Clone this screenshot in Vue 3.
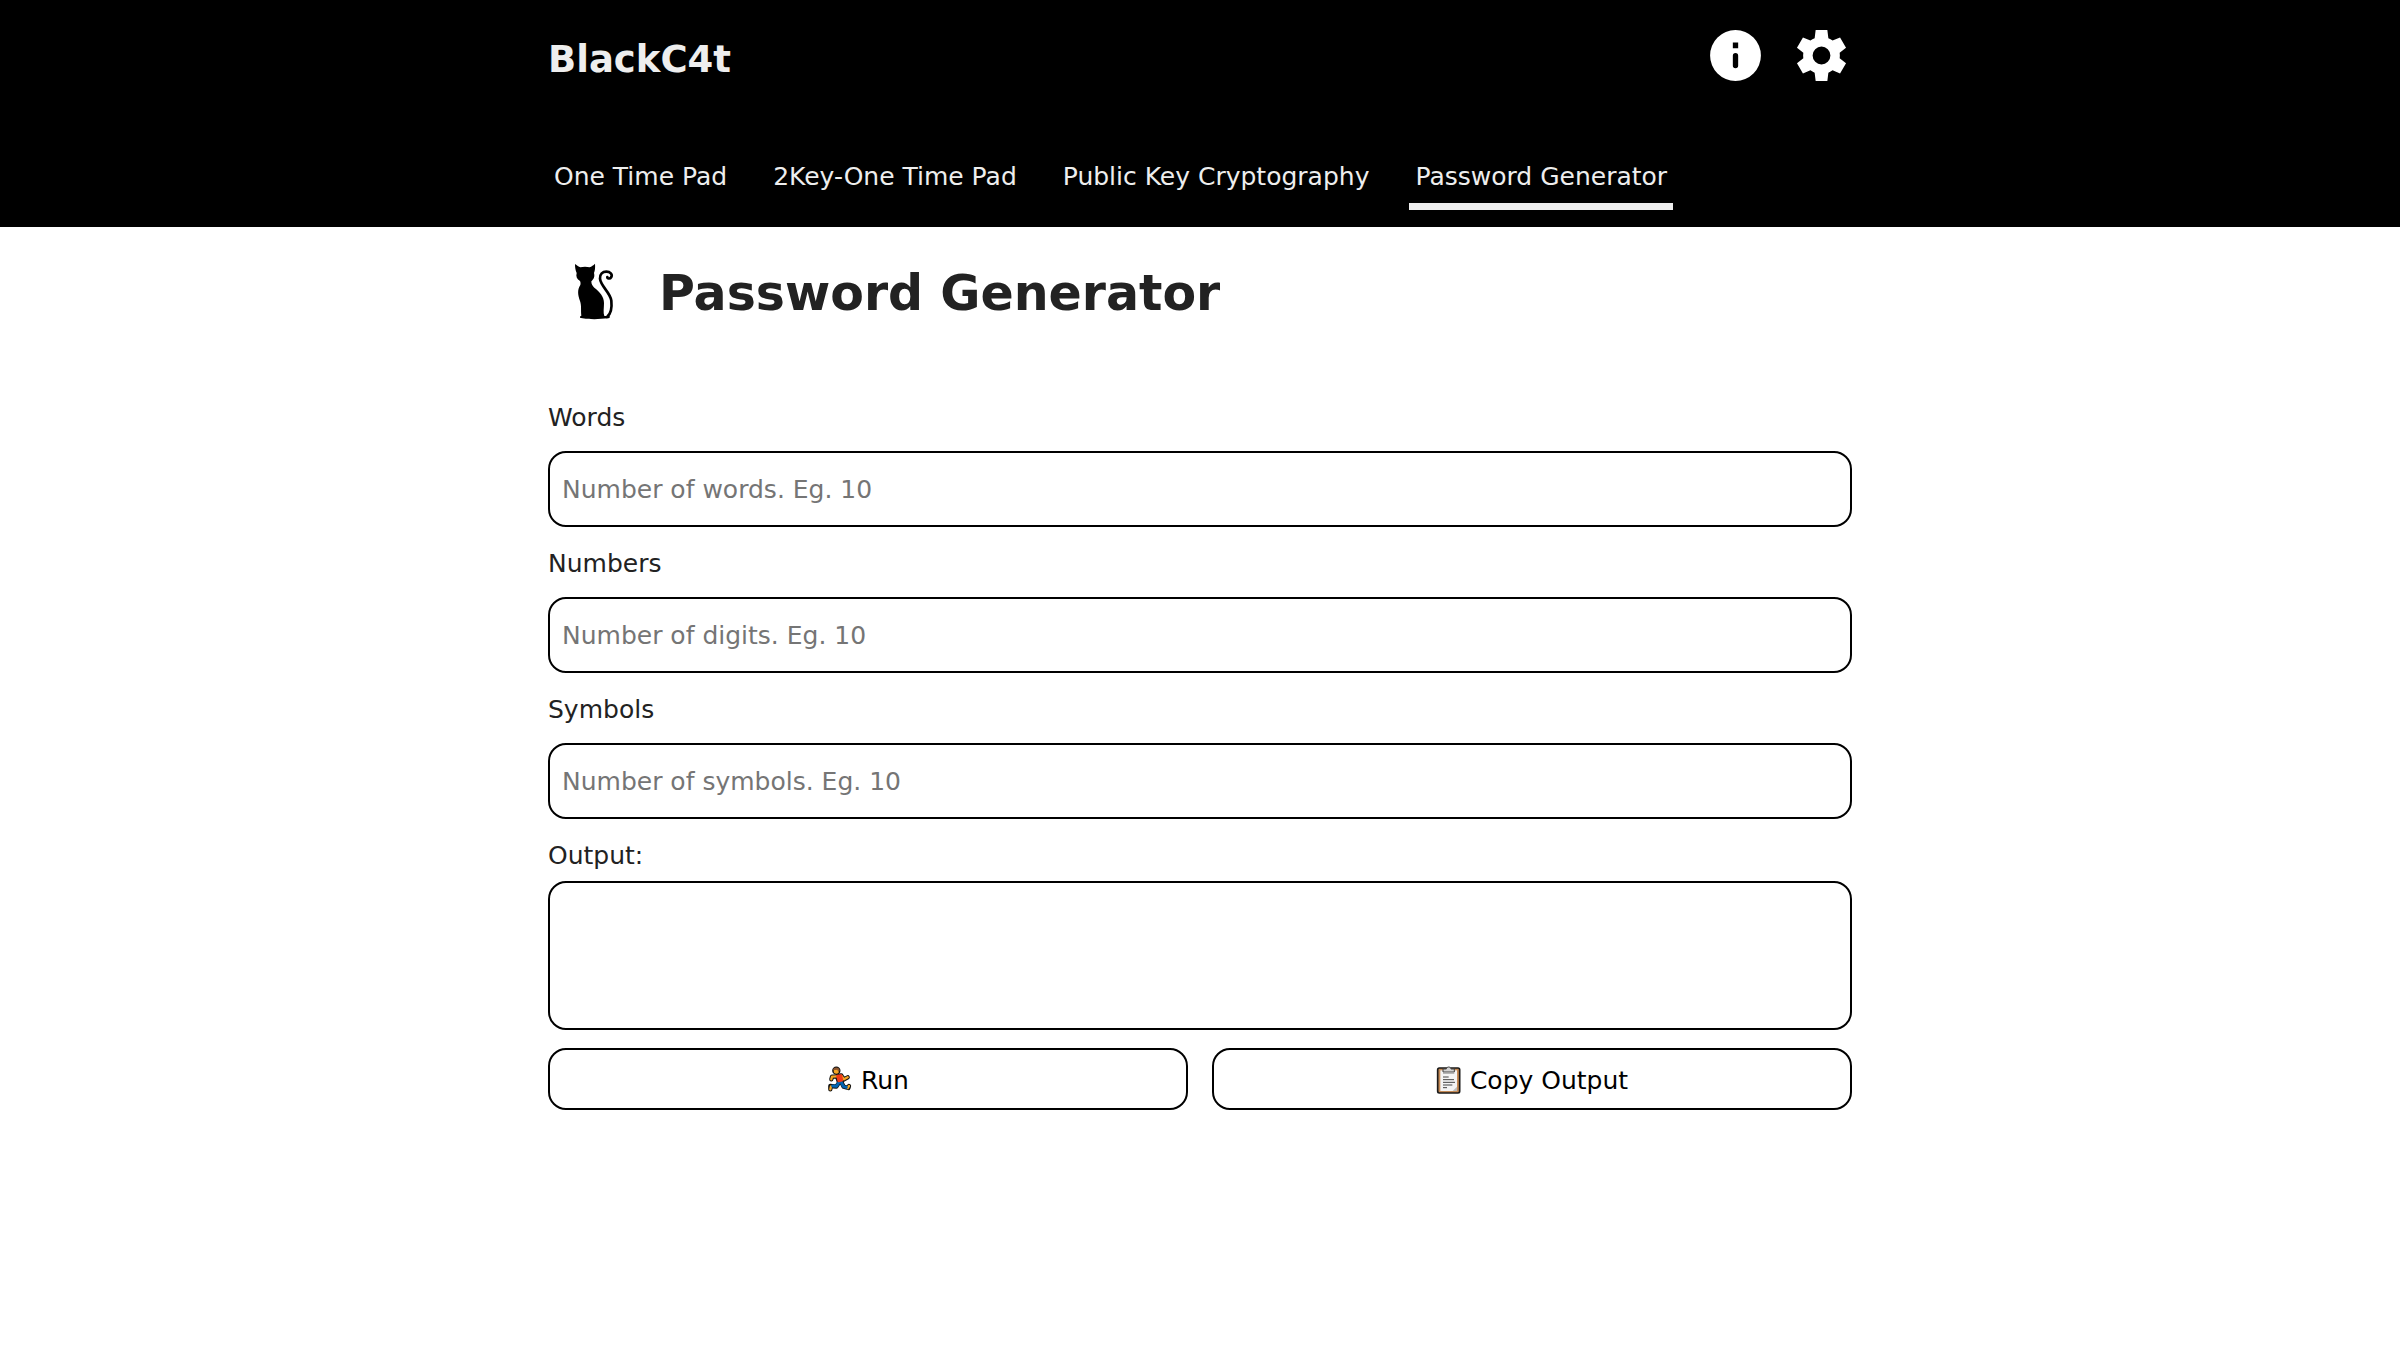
<script setup>
import { ref } from 'vue'

const tabs = ['One Time Pad', '2Key-One Time Pad', 'Public Key Cryptography', 'Password Generator']
const active = ref('Password Generator')

const fields = [
  { id: 'words', label: 'Words', placeholder: 'Number of words. Eg. 10' },
  { id: 'numbers', label: 'Numbers', placeholder: 'Number of digits. Eg. 10' },
  { id: 'symbols', label: 'Symbols', placeholder: 'Number of symbols. Eg. 10' },
]
const values = ref({ words: '', numbers: '', symbols: '' })
const output = ref('')

const wordList = ['amber', 'birch', 'cloud', 'delta', 'ember', 'frost', 'grove', 'harbor', 'iris', 'lunar']
const pick = (source) => source[Math.floor(Math.random() * source.length)]
const many = (count, source) => Array.from({ length: Number(count) || 0 }, () => pick(source))

function run() {
  const { words, numbers, symbols } = values.value
  output.value = [
    many(words, wordList).join('-'),
    many(numbers, '0123456789').join(''),
    many(symbols, '!@#$%^&*?').join(''),
  ].join('')
}

function copyOutput() {
  navigator.clipboard?.writeText(output.value)
}
</script>

<template>
  <header class="top">
    <div class="wrap">
      <div class="bar">
        <a class="brand" href="#">BlackC4t</a>
        <div class="actions">
          <button class="icon" type="button" aria-label="About">
            <svg viewBox="0 0 24 24">
              <path
                fill="#fff"
                fill-rule="evenodd"
                d="M12 2a10 10 0 1 0 0 20 10 10 0 0 0 0-20zM10.950 6.900h2.100v2.200h-2.100zM12 11a1.050 1.050 0 0 1 1.050 1.050v3.900a1.050 1.050 0 0 1-2.100 0v-3.900A1.050 1.050 0 0 1 12 11z"
              />
            </svg>
          </button>
          <button class="icon" type="button" aria-label="Settings">
            <svg viewBox="0 0 24 24">
              <path
                fill="#fff"
                fill-rule="evenodd"
                d="M9.700 2h4.600l.4 3.200c.6.240 1.150.560 1.650.940l2.950-1.200 2.350 4-2.500 1.950c.1.700.1 1.500 0 2.200l2.500 1.950-2.350 4-2.950-1.200c-.5.380-1.050.7-1.650.940l-.4 3.220H9.700l-.4-3.220c-.6-.240-1.150-.560-1.650-.940l-2.950 1.200-2.350-4 2.500-1.950c-.1-.7-.1-1.500 0-2.200L2.350 8.940l2.350-4 2.950 1.200c.5-.380 1.050-.7 1.650-.940zM12 8.500a3.500 3.500 0 1 0 0 7 3.500 3.500 0 0 0 0-7z"
              />
            </svg>
          </button>
        </div>
      </div>
      <nav class="tabs">
        <a
          v-for="tab in tabs"
          :key="tab"
          href="#"
          class="tab"
          :class="{ current: tab === active }"
          @click.prevent="active = tab"
        >{{ tab }}</a>
      </nav>
    </div>
  </header>

  <main class="wrap">
    <div class="heading">
      <svg class="cat" viewBox="0 0 180 210" aria-hidden="true">
        <path
          d="M30 27C36 31 41 35 46 37Q60 34 74 37C80 34 85 31 90 26C91 38 90 46 87 54C90 66 86 72 79 79C79 87 82 93 88 98C104 110 117 125 117 144C117 160 114 172 118 183H130C137 183 137 189 128 190C104 193 72 194 48 189C43 188 44 183 49 182C47 164 50 152 45 138C38 118 37 104 46 90C47 86 47 82 45 78C36 73 32 65 35 54C31 45 30 37 30 27Z"
        />
        <path
          d="M126 186C139 176 141 156 139 137C136 112 107 94 105 71C104 57 113 50 124 50C136 50 143 58 139 66C135 73 126 71 127 66"
          fill="none"
          stroke="#000"
          stroke-width="8"
          stroke-linecap="round"
        />
      </svg>
      <h1>Password Generator</h1>
    </div>

    <form @submit.prevent="run">
      <div v-for="field in fields" :key="field.id" class="field">
        <label :for="field.id">{{ field.label }}</label>
        <input :id="field.id" v-model="values[field.id]" type="text" :placeholder="field.placeholder" />
      </div>
      <div class="field result">
        <label for="output">Output:</label>
        <textarea id="output" v-model="output" readonly></textarea>
      </div>
      <div class="buttons">
        <button class="action" type="submit">
          <svg class="glyph" viewBox="0 0 78 84" aria-hidden="true">
            <g stroke="#111" stroke-width="13" stroke-linecap="round" stroke-linejoin="round" fill="none">
              <circle cx="28" cy="14" r="6" />
              <path d="M30 30 43 28 46 44 35 46Z M43 29 51 40 62 34 M29 31 15 32 13 40 M36 50 28 62 10 60 10 70 M44 50 50 62 64 66 66 60" />
            </g>
            <g stroke-linecap="round" stroke-linejoin="round" fill="none" stroke-width="7">
              <path d="M43 29 51 40 62 34M29 31 15 32 13 40" stroke="#f5a623" />
              <path d="M12 61 10 70M62 66 66 60" stroke="#f5a623" />
              <path d="M36 49 28 61 17 60M43 49 49 61 58 64" stroke="#0063b1" stroke-width="9" />
              <path d="M31 30 42 28 45 43 35 45Z" stroke="#f03a17" fill="#f03a17" />
            </g>
            <circle cx="28" cy="15" r="8" fill="#f5a623" />
            <path d="M18 13C18 2 38 2 38 14L34 18 31 11Z" fill="#8e562e" />
          </svg>
          <span>Run</span>
        </button>
        <button class="action" type="button" @click="copyOutput">
          <svg class="glyph" viewBox="0 0 78 84" aria-hidden="true">
            <rect x="5" y="6" width="66" height="75" rx="5" fill="#c58a55" stroke="#1a1a1a" stroke-width="5" />
            <path d="M13 13H63V75H13Z" fill="#f4f4f4" />
            <path d="M63 62V75H50Z" fill="#bdbdbd" />
            <path d="M21 18V9H31C32 1 44 1 45 9H55V18Z" fill="#d2d2d2" stroke="#444" stroke-width="3" />
            <path d="M21 22H55" stroke="#aaa" stroke-width="3" />
            <path d="M21 33H38M21 41H54M21 49H57M21 57H49M21 65H33" stroke="#444" stroke-width="3" />
          </svg>
          <span>Copy Output</span>
        </button>
      </div>
    </form>
  </main>
</template>

<style>
body {
  margin: 0;
  background: #fff;
}
</style>

<style scoped>
.top,
main {
  font-family: Verdana, 'DejaVu Sans', sans-serif;
  font-size: 25px;
  line-height: 38px;
  color: #222;
}

.wrap {
  box-sizing: border-box;
  width: 100%;
  max-width: 1304px;
  margin: 0 auto;
}

.top {
  background: #000;
  padding: 25px 0 17px;
}

.bar {
  display: flex;
  justify-content: space-between;
  align-items: flex-end;
}

.brand {
  font-size: 37px;
  line-height: 52px;
  font-weight: bold;
  color: #eee;
  text-decoration: none;
}

.actions {
  display: flex;
  gap: 25px;
}

.icon {
  display: block;
  width: 61px;
  height: 61px;
  padding: 0;
  border: 0;
  background: none;
  cursor: pointer;
}

.icon svg {
  display: block;
  width: 100%;
  height: 100%;
}

.tabs {
  display: flex;
  flex-wrap: wrap;
  gap: 34px;
  margin-top: 72px;
}

.tab {
  padding: 0 6px 7px;
  border-bottom: 7px solid transparent;
  color: #eee;
  text-decoration: none;
}

.tab.current {
  border-color: #eee;
}

.heading {
  display: flex;
  align-items: flex-end;
  gap: 34px;
  padding: 28px 0 0 17px;
}

.cat {
  width: 60px;
  height: 70px;
}

h1 {
  margin: 0;
  font-size: 49px;
  line-height: 62px;
}

form {
  margin-top: 74px;
}

.field {
  display: flex;
  flex-direction: column;
  gap: 14px;
  margin-bottom: 18px;
}

.result {
  gap: 6px;
}

input,
textarea,
.action {
  box-sizing: border-box;
  border: 2px solid #000;
  border-radius: 18px;
  background: #fff;
  color: #000;
  font-family: inherit;
  font-size: 25px;
}

input,
textarea {
  display: block;
  width: 100%;
  padding: 0 12px;
}

input {
  height: 76px;
}

textarea {
  height: 149px;
  padding: 12px;
  resize: none;
}

::placeholder {
  color: #757575;
  opacity: 1;
}

.buttons {
  display: grid;
  grid-template-columns: 1fr 1fr;
  gap: 24px;
}

.action {
  display: flex;
  align-items: center;
  justify-content: center;
  gap: 8px;
  height: 62px;
  padding: 2px 12px 0;
  cursor: pointer;
}

.glyph {
  width: 26px;
  height: 28px;
}
</style>
